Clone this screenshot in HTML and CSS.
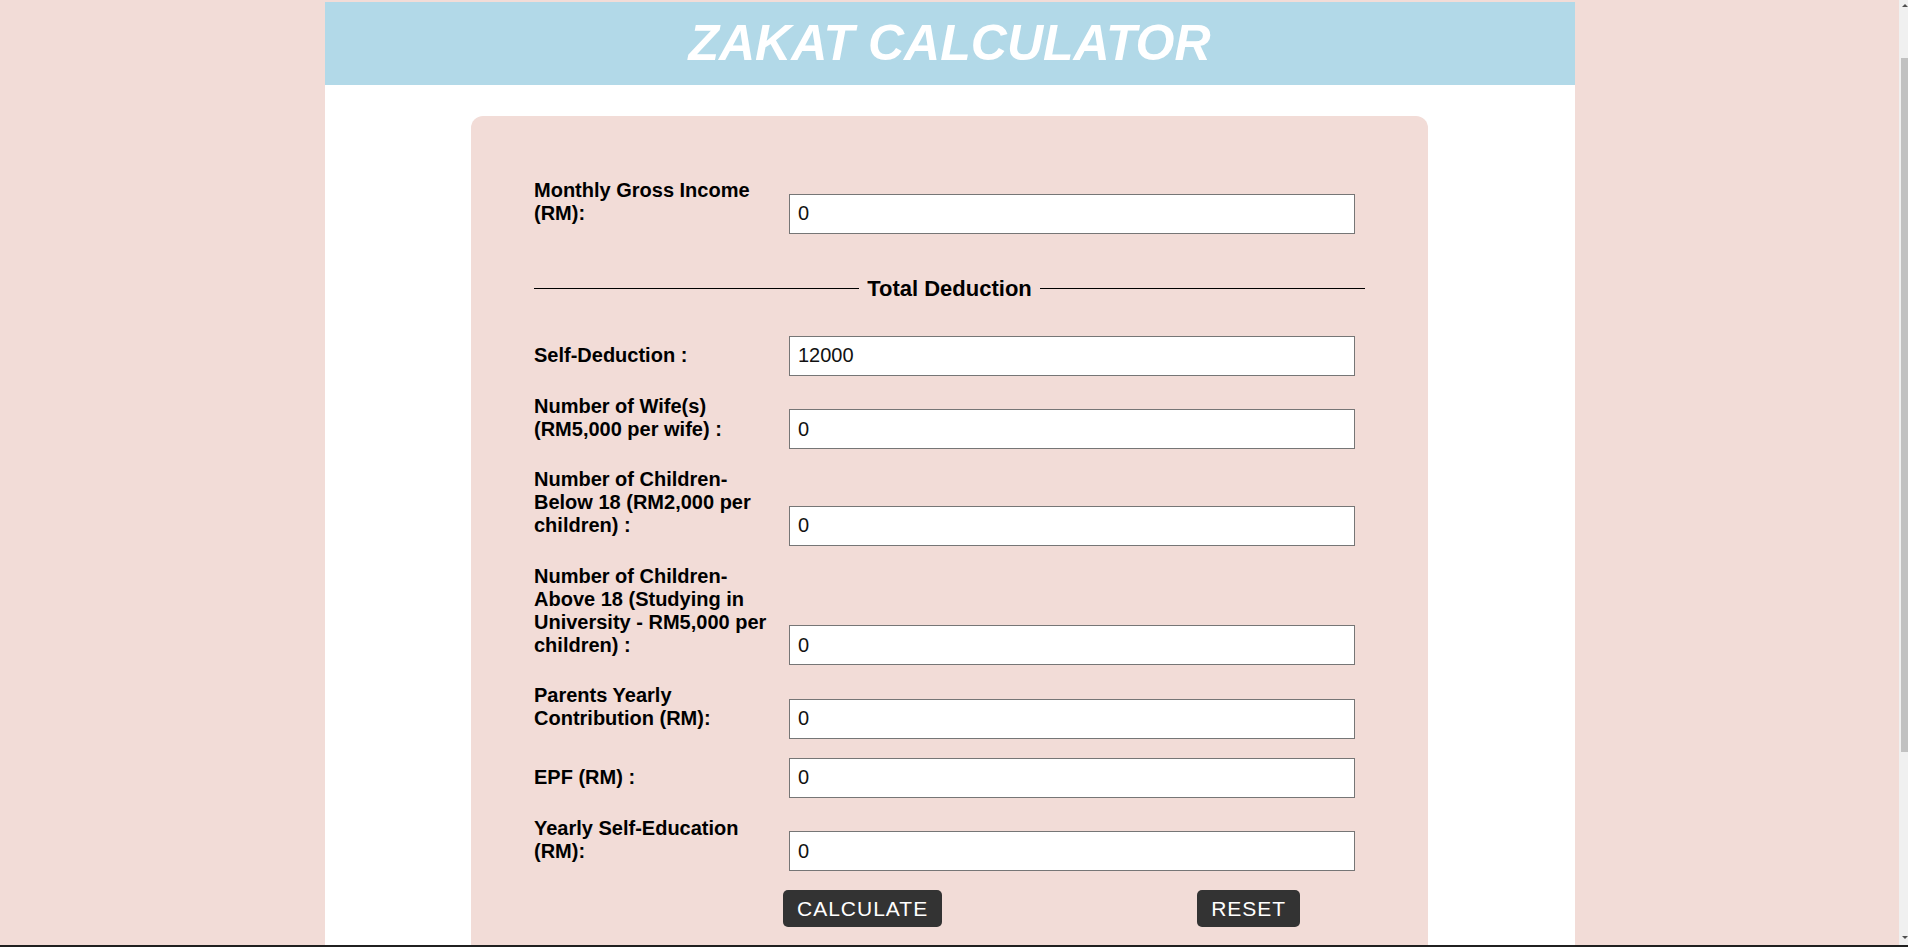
FILE: index.html
```html
<!DOCTYPE html>
<html lang="en">
<head>
<meta charset="utf-8">
<title>Zakat Calculator</title>
<link rel="stylesheet" href="styles.css">
</head>
<body>
<div class="page">
  <div class="container">
    <header class="header"><h1 class="title">ZAKAT CALCULATOR</h1></header>
    <main class="content">
      <form class="card">
        <div class="row"><label class="label">Monthly Gross Income (RM):</label><input class="field" type="text" value="0"></div>
        <div class="divider"><span class="divider-line"></span><span class="divider-text">Total Deduction</span><span class="divider-line"></span></div>
        <div class="row"><label class="label">Self-Deduction :</label><input class="field" type="text" value="12000"></div>
        <div class="row"><label class="label">Number of Wife(s) (RM5,000 per wife) :</label><input class="field" type="text" value="0"></div>
        <div class="row"><label class="label">Number of Children-Below 18 (RM2,000 per children) :</label><input class="field" type="text" value="0"></div>
        <div class="row"><label class="label">Number of Children-Above 18 (Studying in University - RM5,000 per children) :</label><input class="field" type="text" value="0"></div>
        <div class="row"><label class="label">Parents Yearly Contribution (RM):</label><input class="field" type="text" value="0"></div>
        <div class="row"><label class="label">EPF (RM) :</label><input class="field" type="text" value="0"></div>
        <div class="row"><label class="label">Yearly Self-Education (RM):</label><input class="field" type="text" value="0"></div>
        <div class="actions"><button class="btn" type="button">CALCULATE</button><button class="btn" type="reset">RESET</button></div>
      </form>
    </main>
  </div>
</div>
<div class="scrollbar"><span class="arrow arrow-up"></span><span class="thumb"></span><span class="arrow arrow-down"></span></div>
<div class="screen-edge"></div>
</body>
</html>
```
FILE: styles.css
```css
html, body {
  margin: 0;
  padding: 0;
}
body {
  background: #f2dcd7;
  font-family: "Liberation Sans", Arial, sans-serif;
  color: #000;
}
.page {
  padding: 2px 9px 0 0;
}
.container {
  width: 1250px;
  margin: 0 auto;
  background: #fff;
  min-height: 1100px;
}
.header {
  background: #b2d9e8;
  height: 83px;
  display: flex;
  align-items: center;
  justify-content: center;
}
.title {
  margin: 0 0 2px;
  color: #fff;
  font-size: 50px;
  font-weight: bold;
  font-style: italic;
  line-height: normal;
}
.content {
  padding-top: 31px;
}
.card {
  display: block;
  width: 957px;
  box-sizing: border-box;
  margin: 0 auto;
  background: #f2dcd7;
  border-radius: 12px;
  padding: 63px;
}
.row {
  font-size: 20px;
  line-height: 23px;
  font-weight: bold;
  margin-bottom: 19px;
}
.label {
  display: inline-block;
  width: 255px;
  box-sizing: border-box;
  padding-right: 10px;
  vertical-align: baseline;
}
.field {
  display: inline-block;
  vertical-align: baseline;
  width: 566px;
  height: 40px;
  box-sizing: border-box;
  border: 1px solid #767676;
  border-radius: 0;
  padding: 0 8px;
  margin: 0;
  background: #fff;
  font-family: "Liberation Sans", Arial, sans-serif;
  font-size: 20px;
  font-weight: normal;
  color: #111;
  outline: none;
}
.divider {
  display: flex;
  align-items: center;
  gap: 8px;
  margin: 42px 0 35px;
  font-size: 22px;
  line-height: 25px;
  font-weight: bold;
}
.divider-line {
  flex: 1;
  height: 1px;
  background: #000;
}
.divider-text {
  white-space: nowrap;
}
.actions {
  display: flex;
  gap: 255px;
  padding-left: 249px;
}
.btn {
  background: #333;
  color: #fff;
  border: none;
  border-radius: 5px;
  font-family: "Liberation Sans", Arial, sans-serif;
  font-size: 21px;
  letter-spacing: 1px;
  line-height: 25px;
  padding: 6px 14px;
  margin: 0;
  cursor: pointer;
}
.scrollbar {
  position: fixed;
  top: 0;
  right: 0;
  width: 9px;
  height: 100%;
  background: #f0f0f0;
}
.thumb {
  position: absolute;
  top: 58px;
  left: 2px;
  right: 0;
  height: 694px;
  background: #c1c1c1;
}
.arrow {
  position: absolute;
  left: 3px;
  width: 0;
  height: 0;
  border-left: 3px solid transparent;
  border-right: 3px solid transparent;
}
.arrow-up {
  top: 4px;
  border-bottom: 3px solid #505050;
}
.arrow-down {
  bottom: 8px;
  border-top: 3px solid #505050;
}
.screen-edge {
  position: fixed;
  left: 0;
  right: 0;
  bottom: 0;
  height: 2px;
  background: #202020;
}
```
